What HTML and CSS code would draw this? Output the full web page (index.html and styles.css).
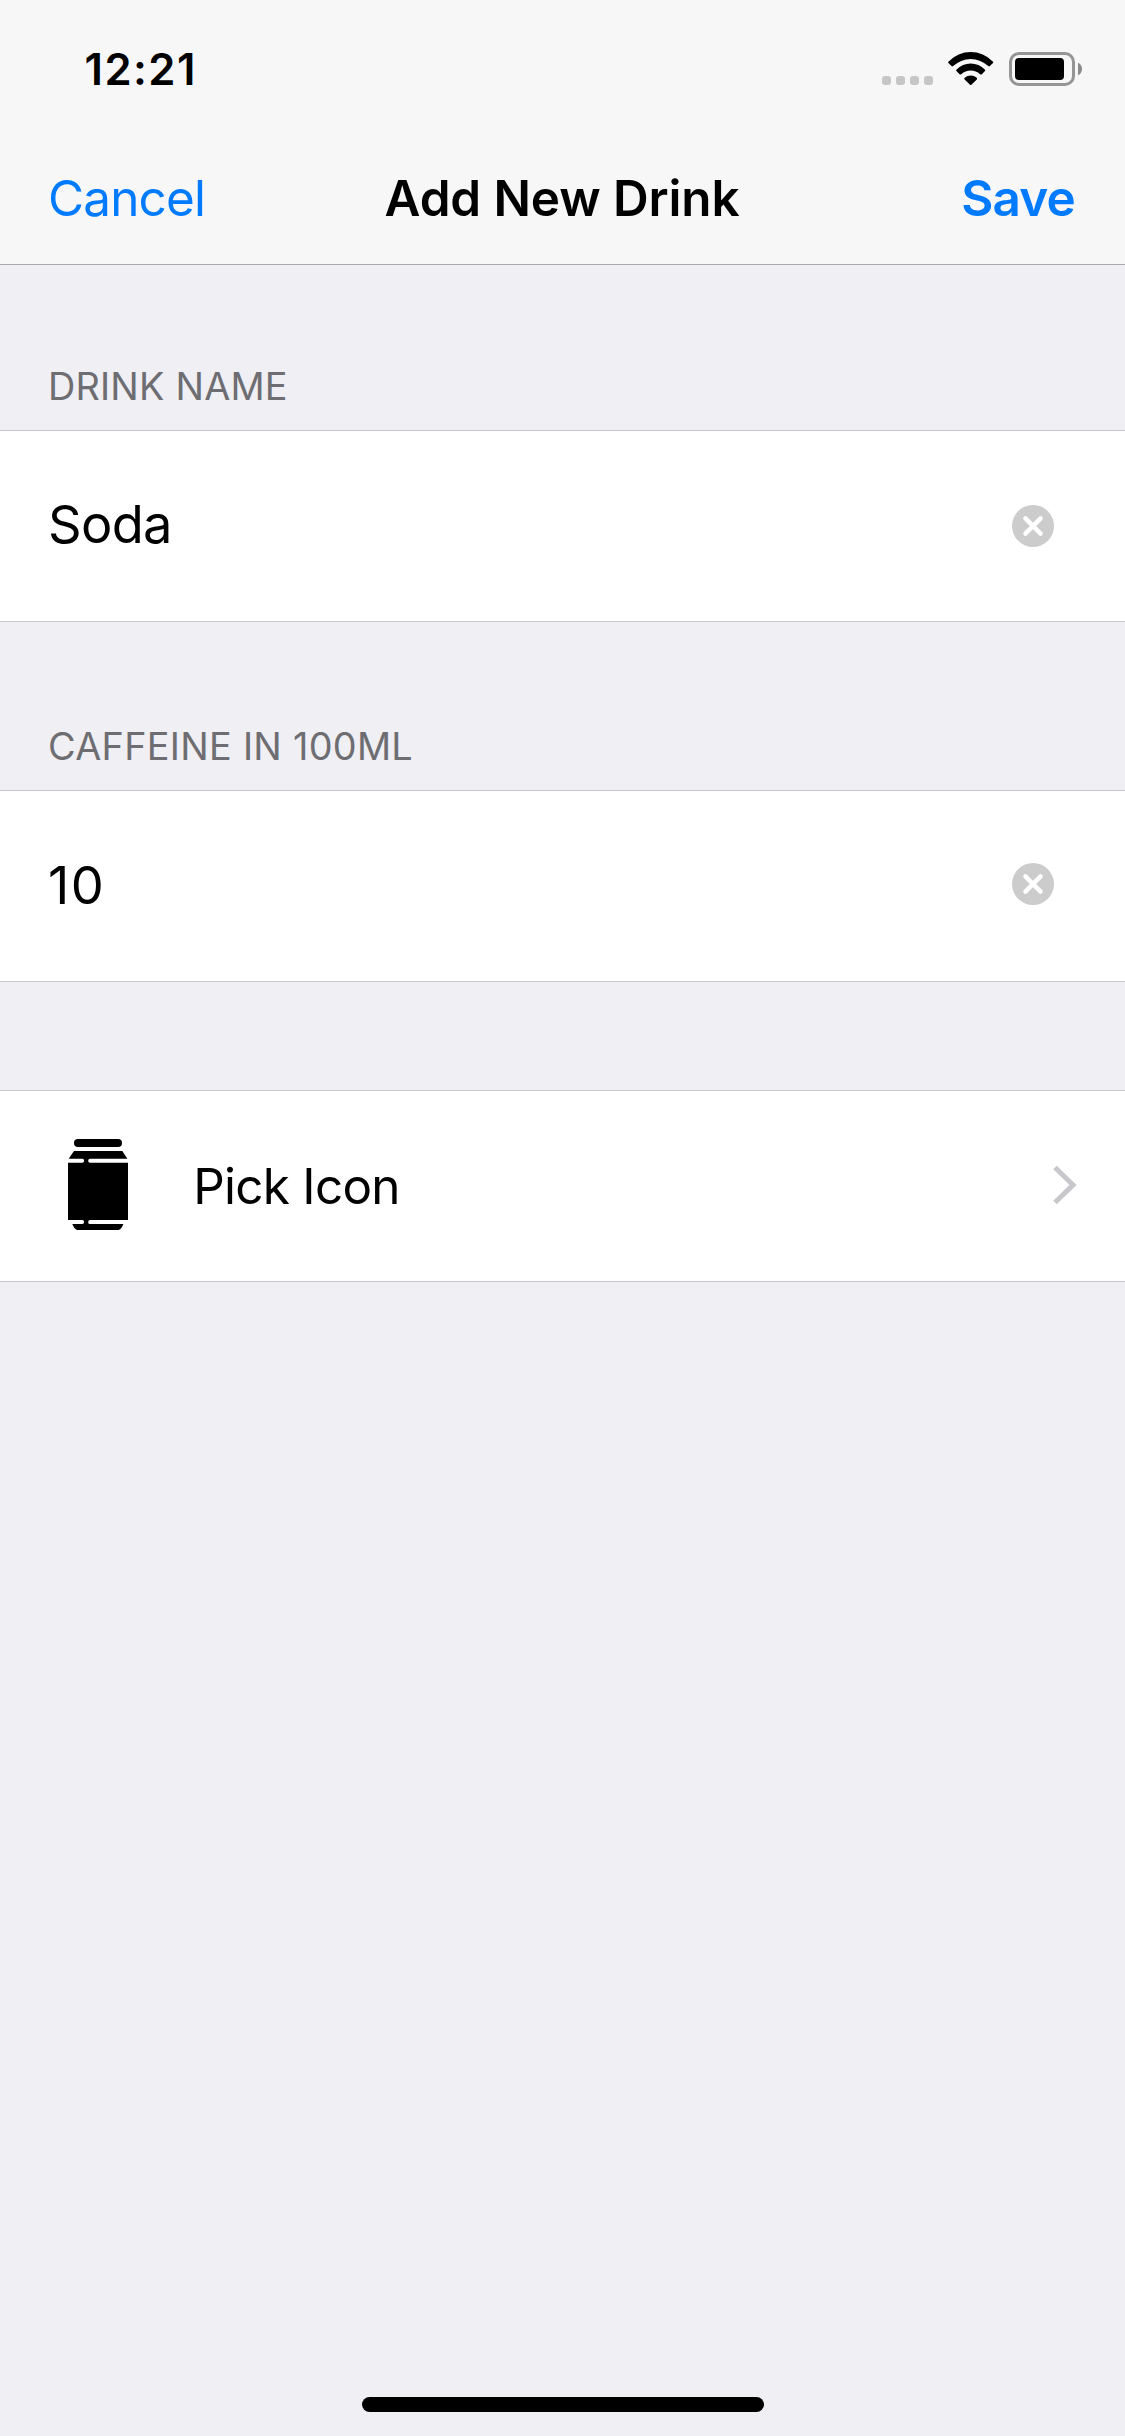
FILE: index.html
```html
<!DOCTYPE html>
<html lang="en">
<head>
  <meta charset="utf-8">
  <title>Add New Drink</title>
  <link rel="stylesheet" href="styles.css">
</head>
<body>
  <div class="screen">
    <header class="top">
      <div class="status-bar">
        <span class="time">12:21</span>
        <div class="status-icons">
          <div class="signal"><i class="dot"></i><i class="dot"></i><i class="dot"></i><i class="dot"></i></div>
          <svg class="wifi" viewBox="0 0 46 34" width="46" height="34" aria-label="Wi-Fi">
            <path d="M.6 9.4A30.8 30.8 0 0 1 44.8 9.4Q45.7 10.2 45 11L41.9 14.1Q41.2 14.9 40.3 14.1A25.5 25.5 0 0 0 5.1 14.1Q4.2 14.9 3.5 14.1L.4 11Q-.3 10.2 .6 9.4Z"/>
            <path d="M8.6 17.5A19.5 19.5 0 0 1 36.8 17.5Q37.7 18.3 37 19.1L33.8 22.2Q33 22.9 32.1 22.2A14 14 0 0 0 13.3 22.2Q12.4 22.9 11.6 22.2L8.4 19.1Q7.7 18.3 8.6 17.5Z"/>
            <path d="M16.7 25.8A9 9 0 0 1 28.7 25.8Q29.6 26.6 28.8 27.4L23.4 32.7Q22.7 33.4 22 32.7L16.6 27.4Q15.8 26.6 16.7 25.8Z"/>
          </svg>
          <svg class="battery" viewBox="0 0 74 34" width="74" height="34" aria-label="Battery">
            <rect x="1.5" y="1.5" width="63" height="31" rx="8.5" fill="none" stroke="#959595" stroke-width="3"/>
            <rect x="6" y="6" width="49" height="22" rx="4"/>
            <path d="M69 10.7Q73 12.5 73 17T69 23.2Z" fill="#8b8b8b"/>
          </svg>
        </div>
      </div>
      <nav class="nav-bar">
        <a class="action cancel">Cancel</a>
        <h1 class="title">Add New Drink</h1>
        <a class="action save">Save</a>
      </nav>
    </header>

    <main class="form">
      <section class="group">
        <h2 class="group-label">DRINK NAME</h2>
        <div class="cell field name">
          <span class="value">Soda</span>
          <svg class="clear" viewBox="0 0 42 42" width="42" height="42" aria-label="Clear text">
            <circle cx="21" cy="21" r="21"/>
            <path d="M13.4 13.4 28.6 28.6M28.6 13.4 13.4 28.6"/>
          </svg>
        </div>
      </section>
      <section class="group">
        <h2 class="group-label caffeine-label">CAFFEINE IN 100ML</h2>
        <div class="cell field amount">
          <span class="value">10</span>
          <svg class="clear" viewBox="0 0 42 42" width="42" height="42" aria-label="Clear text">
            <circle cx="21" cy="21" r="21"/>
            <path d="M13.4 13.4 28.6 28.6M28.6 13.4 13.4 28.6"/>
          </svg>
        </div>
      </section>
      <section class="group">
        <div class="cell picker">
          <svg class="can" viewBox="83 57 180 274" width="60" height="91.333">
            <rect x="101" y="57" width="144" height="24" rx="12"/>
            <path d="M101 93H246L261 116H149Q143 117 144 122.500Q143 128 149 128H263V300H149Q143 301 144 306.500Q143 312 149 312H249Q243 331 229 331H116Q103 331 96 312H126Q132 311 131 306.500Q132 301 126 300H83V128H126Q132 127 131 122.500Q132 117 126 116H85Z"/>
          </svg>
          <span class="picker-label">Pick Icon</span>
          <svg class="chevron" viewBox="0 0 24 40" width="24" height="40">
            <path d="M2 2.500 20 20 2 37.500"/>
          </svg>
        </div>
      </section>
    </main>

    <div class="home-indicator"></div>
  </div>
</body>
</html>
```
FILE: styles.css
```css
* {
  box-sizing: border-box;
}

body {
  margin: 0;
  background: #efeff4;
  color: #000;
  font-family: "Inter", "Liberation Sans", sans-serif;
}

.screen {
  display: flex;
  flex-direction: column;
  width: 1125px;
  height: 2436px;
  padding-bottom: 24px;
}

svg {
  display: block;
  flex: none;
}

/* Status and navigation bars */
.top {
  background: #f7f7f7;
  border-bottom: 1px solid #a9a9ac;
}

.status-bar {
  display: flex;
  align-items: center;
  justify-content: space-between;
  height: 132px;
  padding: 6px 42px 0 84.5px;
}

.time {
  font-size: 43.6px;
  font-weight: 600;
  letter-spacing: 1.45px;
}

.status-icons {
  display: flex;
  align-items: flex-end;
}

.signal {
  display: flex;
  gap: 5px;
  margin: 0 15px 1px 0;
}

.dot {
  width: 9px;
  height: 9px;
  border-radius: 3px;
  background: #c6c6c6;
}

.wifi {
  margin-right: 15px;
}

.nav-bar {
  display: grid;
  grid-template-columns: 1fr auto 1fr;
  align-items: center;
  height: 132px;
  padding: 0 49px 0 48px;
  font-size: 49.4px;
}

.action {
  color: #007aff;
  letter-spacing: -0.8px;
}

.save {
  justify-self: end;
  margin-right: 1px;
  font-weight: 600;
}

.title {
  margin: 0;
  font-size: inherit;
  font-weight: 600;
  letter-spacing: -0.1px;
}

/* Grouped form */
.form {
  flex: 1;
}

.group-label {
  margin: 0;
  padding: 97px 48px 20px;
  color: #6d6d72;
  font-size: 37.8px;
  font-weight: 400;
  line-height: 48px;
  letter-spacing: 0.2px;
}

.caffeine-label {
  padding-top: 100px;
  letter-spacing: 0.29px;
}

.cell {
  display: flex;
  align-items: center;
  height: 192px;
  border: solid #c8c7cc;
  border-width: 1px 0;
  background: #fff;
}

.field {
  justify-content: space-between;
  padding: 0 71px 0 48px;
  font-size: 52.4px;
}

.name .value {
  padding-bottom: 4px;
  letter-spacing: -0.7px;
}

.amount .value {
  padding-bottom: 2px;
  letter-spacing: 1.5px;
}

.amount .clear {
  margin-bottom: 4px;
}

.clear circle {
  fill: #ccc;
}

.clear path {
  fill: none;
  stroke: #fff;
  stroke-width: 4.4;
  stroke-linecap: round;
}

.picker {
  margin-top: 108px;
  padding: 0 48px 0 67.667px;
}

.can {
  margin-bottom: 2.6px;
}

.picker-label {
  flex: 1;
  margin-left: 65.6px;
  font-size: 49.4px;
  letter-spacing: -0.72px;
}

.chevron {
  margin-bottom: 3px;
}

.chevron path {
  fill: none;
  stroke: #c7c7cc;
  stroke-width: 5;
}

.home-indicator {
  align-self: center;
  width: 402px;
  height: 15px;
  border-radius: 8px;
  background: #000;
}
```
